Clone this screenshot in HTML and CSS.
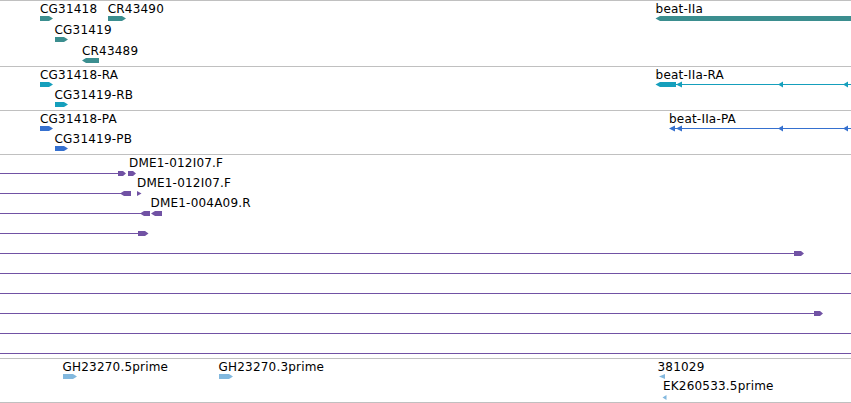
FILE: index.html
```html
<!DOCTYPE html>
<html>
<head>
<meta charset="utf-8">
<link rel="stylesheet" href="styles.css">
</head>
<body>
<div class="browser">
  <div class="track track-gene">
    <svg class="canvas" width="851" height="65" viewBox="0 1 851 65">
      <text class="lbl" x="40" y="13">CG31418</text>
      <text class="lbl" x="107.7" y="13">CR43490</text>
      <text class="lbl" x="655.6" y="13">beat-IIa</text>
      <text class="lbl" x="54.5" y="34">CG31419</text>
      <text class="lbl" x="82" y="55">CR43489</text>
      <polygon class="gene" points="40,16 49,16 53,18.5 49,21 40,21"/>
      <polygon class="gene" points="108,16 122,16 126,18.5 122,21 108,21"/>
      <polygon class="gene" points="655.5,18.5 660,16 851,16 851,21 660,21"/>
      <polygon class="gene" points="55,37 64,37 68,39.5 64,42 55,42"/>
      <polygon class="gene" points="82,60.5 86,58 99,58 99,63 86,63"/>
    </svg>
  </div>
  <div class="track track-short">
    <svg class="canvas" width="851" height="43" viewBox="0 67 851 43">
      <text class="lbl" x="40" y="79">CG31418-RA</text>
      <text class="lbl" x="54.5" y="99">CG31419-RB</text>
      <text class="lbl" x="655.6" y="79">beat-IIa-RA</text>
      <polygon class="tx-ra" points="40,82 49,82 53,84.5 49,87 40,87"/>
      <polygon class="tx-ra" points="55,102 64,102 68,104.5 64,107 55,107"/>
      <polygon class="tx-ra" points="655.5,84.5 660,82 676,82 676,87 660,87"/>
      <rect class="tx-ra" x="676" y="84" width="175" height="1"/>
      <polygon class="tx-ra" points="676,84.5 682,81.5 682,87.5"/>
      <polygon class="tx-ra" points="778,84.5 783,81.5 783,87.5"/>
      <polygon class="tx-ra" points="843,84.5 848,81.5 848,87.5"/>
    </svg>
  </div>
  <div class="track track-short">
    <svg class="canvas" width="851" height="43" viewBox="0 111 851 43">
      <text class="lbl" x="40" y="123">CG31418-PA</text>
      <text class="lbl" x="54.5" y="143">CG31419-PB</text>
      <text class="lbl" x="669" y="123">beat-IIa-PA</text>
      <polygon class="tx-pa" points="40,126 49,126 53,128.5 49,131 40,131"/>
      <polygon class="tx-pa" points="55,146 64,146 68,148.5 64,151 55,151"/>
      <rect class="tx-pa" x="675" y="128" width="176" height="1"/>
      <polygon class="tx-pa" points="669,128.5 675,125.5 675,131.5"/>
      <polygon class="tx-pa" points="676,128.5 682,125.5 682,131.5"/>
      <polygon class="tx-pa" points="778,128.5 783,125.5 783,131.5"/>
      <polygon class="tx-pa" points="843,128.5 848,125.5 848,131.5"/>
    </svg>
  </div>
  <div class="track track-est">
    <svg class="canvas" width="851" height="203" viewBox="0 155 851 203">
      <text class="lbl" x="129" y="167">DME1-012I07.F</text>
      <text class="lbl" x="137" y="187">DME1-012I07.F</text>
      <text class="lbl" x="150.5" y="207">DME1-004A09.R</text>

      <rect class="est" x="0" y="173" width="118" height="1"/>
      <polygon class="est" points="118,171 123,171 126,173.5 123,176 118,176"/>
      <polygon class="est" points="128,171 133,171 136,173.5 133,176 128,176"/>

      <rect class="est" x="0" y="193" width="121" height="1"/>
      <polygon class="est" points="120,193.5 124,191 131,191 131,196 124,196"/>
      <polygon class="est" points="137,191 141.5,193.5 137,196"/>

      <rect class="est" x="0" y="213" width="141" height="1"/>
      <polygon class="est" points="140,213.5 144,211 150,211 150,216 144,216"/>
      <polygon class="est" points="151,213.5 155,211 162,211 162,216 155,216"/>

      <rect class="est" x="0" y="233" width="138" height="1"/>
      <polygon class="est" points="138,231 145,231 148.5,233.5 145,236 138,236"/>

      <rect class="est" x="0" y="253" width="794" height="1"/>
      <polygon class="est" points="794,251 801,251 804,253.5 801,256 794,256"/>

      <rect class="est" x="0" y="273" width="851" height="1"/>
      <rect class="est" x="0" y="293" width="851" height="1"/>

      <rect class="est" x="0" y="313" width="814" height="1"/>
      <polygon class="est" points="814,311 820,311 823,313.5 820,316 814,316"/>

      <rect class="est" x="0" y="333" width="851" height="1"/>
      <rect class="est" x="0" y="353" width="851" height="1"/>
    </svg>
  </div>
  <div class="track track-short track-last">
    <svg class="canvas" width="851" height="43" viewBox="0 359 851 43">
      <text class="lbl" x="62.5" y="371">GH23270.5prime</text>
      <text class="lbl" x="218.5" y="371">GH23270.3prime</text>
      <text class="lbl" x="657.5" y="371">381029</text>
      <text class="lbl" x="663" y="390">EK260533.5prime</text>
      <polygon class="cdna" points="63,374 73,374 77,376.5 73,379 63,379"/>
      <polygon class="cdna" points="219,374 229,374 233,376.5 229,379 219,379"/>
      <polygon class="cdna" points="659,376.5 665,374 665,379"/>
      <polygon class="cdna" points="662.5,397.5 666.5,395 666.5,400"/>
    </svg>
  </div>
</div>
</body>
</html>
```

FILE: styles.css
```css
html, body {
  margin: 0;
  padding: 0;
  background: #ffffff;
}

.browser {
  width: 851px;
  height: 403px;
  display: flex;
  flex-direction: column;
  overflow: hidden;
}

.track {
  border-top: 1px solid #c0c0c0;
  flex: none;
}

.track-gene {
  height: 65px;
}

.track-short {
  height: 43px;
}

.track-est {
  height: 203px;
}

.track-last {
  border-bottom: 1px solid #c0c0c0;
}

.canvas {
  display: block;
  overflow: hidden;
}

.lbl {
  font-family: "DejaVu Sans", "Liberation Sans", sans-serif;
  font-size: 12px;
  letter-spacing: 0.2px;
  fill: #000000;
}

.gene {
  fill: #3b8e8f;
}

.tx-ra {
  fill: #159fbc;
}

.tx-pa {
  fill: #3570cf;
}

.est {
  fill: #7152a4;
}

.cdna {
  fill: #82b8de;
}
```
